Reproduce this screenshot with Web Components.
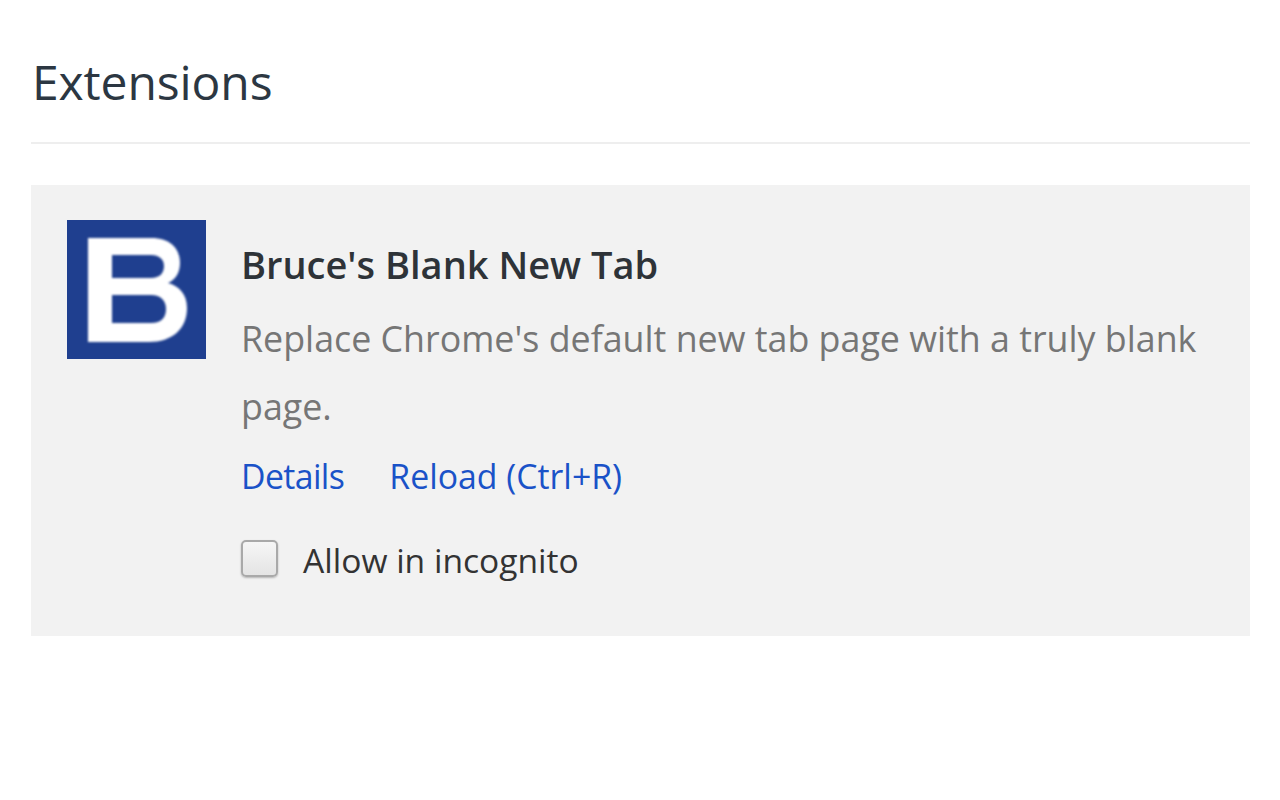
<!DOCTYPE html>
<html>
<head>
<meta charset="utf-8">
<title>Extensions</title>
<style>
  html, body { margin: 0; background: #fff; }
  body { font-family: "Open Sans", "Noto Sans", sans-serif; }
</style>
</head>
<body>
<ext-page>
  <ext-card name="Bruce's Blank New Tab" description="Replace Chrome's default new tab page with a truly blank page."></ext-card>
</ext-page>

<script>
class ExtPage extends HTMLElement {
    constructor() {
        super();
        this.shadowDOM = this.attachShadow({mode: "open"});
    }

    connectedCallback() {
        this.shadowDOM.innerHTML = `
        <style>
            :host { display: block; padding: 0 30px 0 31px; }
            h1 {
                margin: 0;
                padding: 52px 0 30px 1px;
                font-size: 48px;
                line-height: 60px;
                font-weight: 400;
                letter-spacing: -0.1px;
                color: #2c3742;
                border-bottom: 2px solid #eeeeee;
            }
            .content { padding-top: 41px; }
        </style>
        <h1>Extensions</h1>
        <div class="content"><slot></slot></div>
        `;
    }
}

class ExtCard extends HTMLElement {
    constructor() {
        super();
        this.shadowDOM = this.attachShadow({mode: "open"});
    }

    connectedCallback() {
        this.shadowDOM.innerHTML = `
        <style>
            :host {
                display: flex;
                gap: 35px;
                height: 451px;
                box-sizing: border-box;
                padding: 35px 36px;
                background: #f2f2f2;
            }
            .logo { width: 139px; height: 139px; flex: none; display: block; }
            .body { flex: 1; min-width: 0; }
            .name {
                margin: 20px 0 0;
                font-size: 38px;
                line-height: 48px;
                font-weight: 600;
                color: #2e3338;
            }
            .desc {
                margin: 16px 0 0;
                font-size: 35.8px;
                line-height: 68px;
                color: #767676;
            }
            .links { display: flex; gap: 45px; margin-top: 14px; }
            a {
                font-size: 33.8px;
                line-height: 44px;
                color: #1a52c8;
                text-decoration: none;
            }
            a.short { letter-spacing: -0.6px; }
        </style>
        <svg class="logo" viewBox="0 0 139 139">
            <defs><filter id="soft"><feGaussianBlur stdDeviation="1.3"/></filter></defs>
            <rect width="139" height="139" fill="#1f3f8f"/>
            <path filter="url(#soft)" fill="#fff" fill-rule="evenodd" d="M21 18H84C105 18 113 30 113 43C113 53 108 60 101 63C112 66 120 74 120 88C120 109 105 122 82 122H21ZM45 35V58H84C93 58 97 53 97 46C97 39 92 35 84 35ZM45 75V103H84C95 103 99 97 99 89C99 81 94 75 84 75Z"/>
        </svg>
        <div class="body">
            <p class="name">${this.getAttribute("name")}</p>
            <p class="desc">${this.getAttribute("description")}</p>
            <div class="links"><a class="short" href="#">Details</a><a href="#">Reload (Ctrl+R)</a></div>
            <ext-check label="Allow in incognito"></ext-check>
        </div>
        `;
    }
}

class ExtCheck extends HTMLElement {
    constructor() {
        super();
        this.shadowDOM = this.attachShadow({mode: "open"});
    }

    connectedCallback() {
        this.shadowDOM.innerHTML = `
        <style>
            :host { display: flex; align-items: center; gap: 25px; margin-top: 36px; }
            .box {
                width: 33px;
                height: 33px;
                flex: none;
                border: 2px solid #a9a9a9;
                border-radius: 5px;
                background: linear-gradient(#f6f6f6, #e4e4e4);
                box-shadow: 0 1px 2px rgba(0, 0, 0, 0.25);
            }
            span { font-size: 33.6px; line-height: 44px; padding-top: 4px; color: #333333; }
        </style>
        <div class="box"></div>
        <span>${this.getAttribute("label")}</span>
        `;
    }
}

customElements.define("ext-page", ExtPage);
customElements.define("ext-card", ExtCard);
customElements.define("ext-check", ExtCheck);
</script>
</body>
</html>
